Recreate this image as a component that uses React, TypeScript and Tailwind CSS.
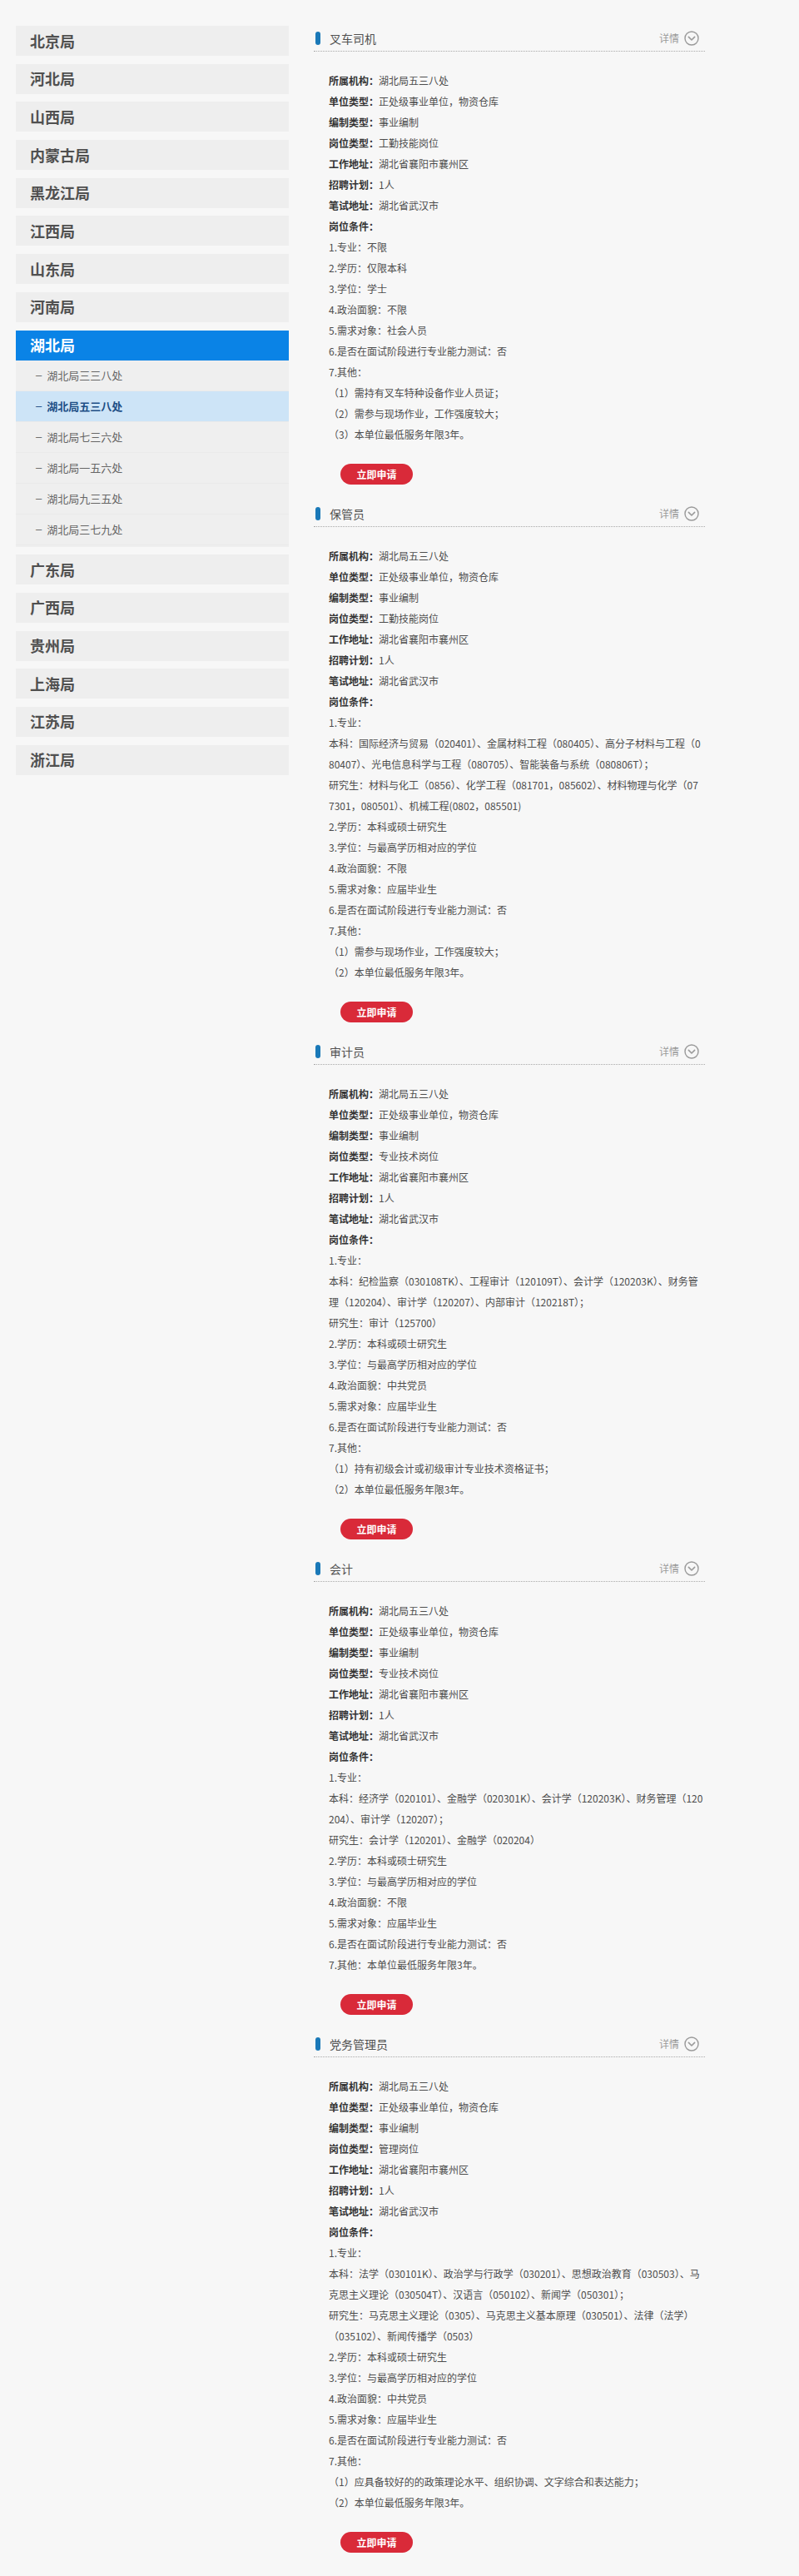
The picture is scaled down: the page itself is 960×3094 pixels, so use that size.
import React from "react";

const FONT = { fontFamily: '"Noto Sans CJK SC", "Noto Sans", sans-serif' };

const provincesTop = ["北京局", "河北局", "山西局", "内蒙古局", "黑龙江局", "江西局", "山东局", "河南局"];
const provincesBottom = ["广东局", "广西局", "贵州局", "上海局", "江苏局", "浙江局"];
const subs = ["湖北局三三八处", "湖北局五三八处", "湖北局七三六处", "湖北局一五六处", "湖北局九三五处", "湖北局三七九处"];

type Job = {
  title: string;
  fields: [string, string][];
  lines: string[];
};

const base = (type: string): [string, string][] => [
  ["所属机构：", "湖北局五三八处"],
  ["单位类型：", "正处级事业单位，物资仓库"],
  ["编制类型：", "事业编制"],
  ["岗位类型：", type],
  ["工作地址：", "湖北省襄阳市襄州区"],
  ["招聘计划：", "1人"],
  ["笔试地址：", "湖北省武汉市"],
  ["岗位条件：", ""],
];

const jobs: Job[] = [
  {
    title: "叉车司机",
    fields: base("工勤技能岗位"),
    lines: [
      "1.专业：不限",
      "2.学历：仅限本科",
      "3.学位：学士",
      "4.政治面貌：不限",
      "5.需求对象：社会人员",
      "6.是否在面试阶段进行专业能力测试：否",
      "7.其他：",
      "（1）需持有叉车特种设备作业人员证；",
      "（2）需参与现场作业，工作强度较大；",
      "（3）本单位最低服务年限3年。",
    ],
  },
  {
    title: "保管员",
    fields: base("工勤技能岗位"),
    lines: [
      "1.专业：",
      "本科：国际经济与贸易（020401）、金属材料工程（080405）、高分子材料与工程（0",
      "80407）、光电信息科学与工程（080705）、智能装备与系统（080806T）；",
      "研究生：材料与化工（0856）、化学工程（081701，085602）、材料物理与化学（07",
      "7301，080501）、机械工程(0802，085501)",
      "2.学历：本科或硕士研究生",
      "3.学位：与最高学历相对应的学位",
      "4.政治面貌：不限",
      "5.需求对象：应届毕业生",
      "6.是否在面试阶段进行专业能力测试：否",
      "7.其他：",
      "（1）需参与现场作业，工作强度较大；",
      "（2）本单位最低服务年限3年。",
    ],
  },
  {
    title: "审计员",
    fields: base("专业技术岗位"),
    lines: [
      "1.专业：",
      "本科：纪检监察（030108TK）、工程审计（120109T）、会计学（120203K）、财务管",
      "理（120204）、审计学（120207）、内部审计（120218T）；",
      "研究生：审计（125700）",
      "2.学历：本科或硕士研究生",
      "3.学位：与最高学历相对应的学位",
      "4.政治面貌：中共党员",
      "5.需求对象：应届毕业生",
      "6.是否在面试阶段进行专业能力测试：否",
      "7.其他：",
      "（1）持有初级会计或初级审计专业技术资格证书；",
      "（2）本单位最低服务年限3年。",
    ],
  },
  {
    title: "会计",
    fields: base("专业技术岗位"),
    lines: [
      "1.专业：",
      "本科：经济学（020101）、金融学（020301K）、会计学（120203K）、财务管理（120",
      "204）、审计学（120207）；",
      "研究生：会计学（120201）、金融学（020204）",
      "2.学历：本科或硕士研究生",
      "3.学位：与最高学历相对应的学位",
      "4.政治面貌：不限",
      "5.需求对象：应届毕业生",
      "6.是否在面试阶段进行专业能力测试：否",
      "7.其他：本单位最低服务年限3年。",
    ],
  },
  {
    title: "党务管理员",
    fields: base("管理岗位"),
    lines: [
      "1.专业：",
      "本科：法学（030101K）、政治学与行政学（030201）、思想政治教育（030503）、马",
      "克思主义理论（030504T）、汉语言（050102）、新闻学（050301）；",
      "研究生：马克思主义理论（0305）、马克思主义基本原理（030501）、法律（法学）",
      "（035102）、新闻传播学（0503）",
      "2.学历：本科或硕士研究生",
      "3.学位：与最高学历相对应的学位",
      "4.政治面貌：中共党员",
      "5.需求对象：应届毕业生",
      "6.是否在面试阶段进行专业能力测试：否",
      "7.其他：",
      "（1）应具备较好的的政策理论水平、组织协调、文字综合和表达能力；",
      "（2）本单位最低服务年限3年。",
    ],
  },
];

function ProvinceItem({ name, active }: { name: string; active?: boolean }) {
  return (
    <div
      className={
        "h-[36px] flex items-center pl-[17px] text-[18px] font-bold " +
        (active ? "bg-[#0a83e6] text-white" : "bg-[#eeeeee] text-[#505050]")
      }
    >
      {name}
    </div>
  );
}

function Chevron() {
  return (
    <svg width="18" height="18" viewBox="0 0 18 18" className="block">
      <circle cx="9" cy="9" r="8" fill="none" stroke="#9a9a9a" strokeWidth="1.4" />
      <path d="M5.4 7.4 L9 11 L12.6 7.4" fill="none" stroke="#9a9a9a" strokeWidth="1.6" strokeLinecap="round" strokeLinejoin="round" />
    </svg>
  );
}

function JobCard({ job }: { job: Job }) {
  return (
    <div className="mb-[20px]">
      <div className="h-[31px] flex items-center border-b border-dotted border-[#a9a9a9] pl-[2px] pr-[7px]">
        <div className="w-[6px] h-[16px] rounded-[3px] bg-[#1a79b8]" />
        <div className="ml-[11px] text-[14px] text-[#505050] flex-1">{job.title}</div>
        <div className="text-[12px] text-[#9a9a9a] mr-[6px]">详情</div>
        <Chevron />
      </div>
      <div className="pt-[22px] px-[18px] text-[12px] leading-[25px] text-[#4d4d4d]">
        {job.fields.map(([k, v]) => (
          <div key={k} className="whitespace-nowrap">
            <span className="font-bold text-[#333333]">{k}</span>
            <span>{v}</span>
          </div>
        ))}
        {job.lines.map((l, i) => (
          <div key={i} className="whitespace-nowrap">
            {l}
          </div>
        ))}
        <div className="mt-[23px] ml-[14px] w-[87px] h-[25px] rounded-full bg-[#d92a39] text-white text-[12px] font-bold flex items-center justify-center">
          立即申请
        </div>
      </div>
    </div>
  );
}

export default function App() {
  return (
    <div className="min-h-screen bg-[#f7f7f7]" style={FONT}>
      <div className="flex pt-[31px] pl-[19px] pb-[5px]">
        <div className="w-[328px] shrink-0 flex flex-col gap-[9.7px]">
          {provincesTop.map((p) => (
            <ProvinceItem key={p} name={p} />
          ))}
          <div>
            <ProvinceItem name="湖北局" active />
            <div className="bg-[#efefef] pb-[2px]">
              {subs.map((s, i) => {
                const active = i === 1;
                return (
                  <div
                    key={s}
                    className={
                      "h-[37px] flex items-center pl-[24px] text-[13px] border-b border-[#eaeaea] " +
                      (active ? "bg-[#cde4f7] text-[#1d4e85] font-bold" : "text-[#666666]")
                    }
                  >
                    <span className="mr-[6px]" style={{ fontFamily: '"Liberation Sans", sans-serif', fontWeight: 400 }}>
                      –
                    </span>
                    <span>{s}</span>
                  </div>
                );
              })}
            </div>
          </div>
          {provincesBottom.map((p) => (
            <ProvinceItem key={p} name={p} />
          ))}
        </div>
        <div className="w-[470px] ml-[30px] shrink-0">
          {jobs.map((j) => (
            <JobCard key={j.title} job={j} />
          ))}
        </div>
      </div>
    </div>
  );
}
